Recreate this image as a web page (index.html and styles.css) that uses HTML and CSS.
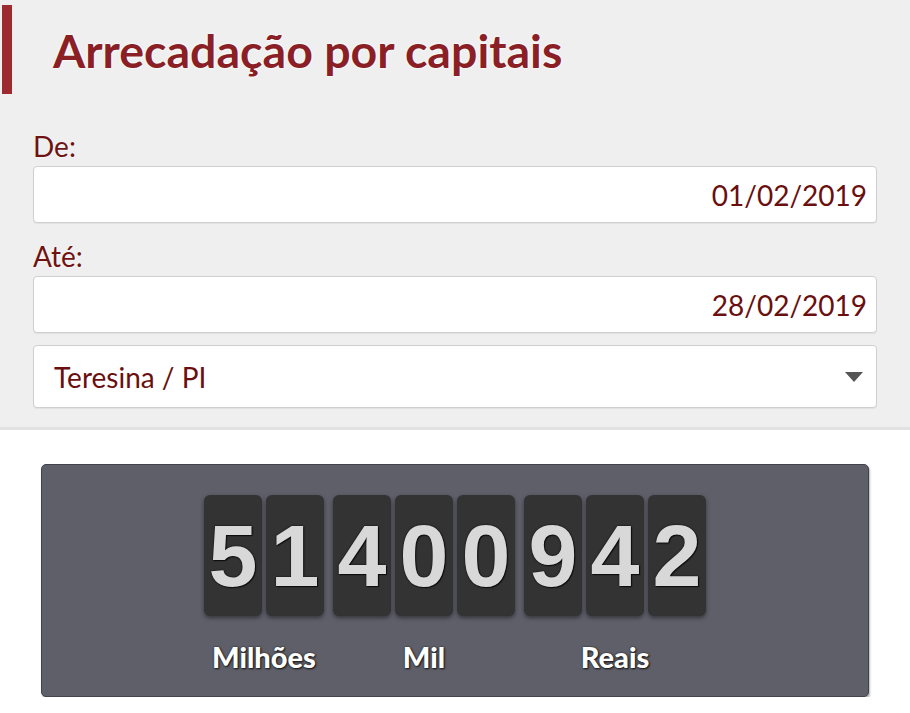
FILE: index.html
```html
<!DOCTYPE html>
<html lang="pt-BR">
<head>
  <meta charset="UTF-8">
  <meta name="viewport" content="width=device-width, initial-scale=1.0">
  <title>Arrecadação por capitais</title>
  <link rel="stylesheet" href="styles.css">
</head>
<body>
  <div class="filter-panel">
    <h1 class="panel-title">Arrecadação por capitais</h1>

    <div class="filter-form">
      <label class="field-label" for="date-from">De:</label>
      <input type="text" id="date-from" class="date-input" value="01/02/2019">

      <label class="field-label field-label-next" for="date-to">Até:</label>
      <input type="text" id="date-to" class="date-input" value="28/02/2019">

      <div class="city-select-wrap">
        <select id="city" class="city-select">
          <option>Teresina / PI</option>
        </select>
        <svg class="select-caret" width="18" height="10" viewBox="0 0 18 10">
          <path d="M0 0 L18 0 L9 10 Z" fill="#555"/>
        </svg>
      </div>
    </div>
  </div>

  <div class="counter-box">
    <div class="counter-groups">
      <div class="counter-group">
        <div class="digit-row">
          <span class="digit">5</span>
          <span class="digit">1</span>
        </div>
        <div class="group-label">Milhões</div>
      </div>
      <div class="counter-group">
        <div class="digit-row">
          <span class="digit">4</span>
          <span class="digit">0</span>
          <span class="digit">0</span>
        </div>
        <div class="group-label">Mil</div>
      </div>
      <div class="counter-group">
        <div class="digit-row">
          <span class="digit">9</span>
          <span class="digit">4</span>
          <span class="digit">2</span>
        </div>
        <div class="group-label">Reais</div>
      </div>
    </div>
  </div>
</body>
</html>
```

FILE: styles.css
```css
* {
  box-sizing: border-box;
}

body {
  font-family: Lato, "Open Sans", Arial, sans-serif;
  margin: 0;
  background: #fff;
}

.filter-panel {
  background: #efefef;
  border-bottom: 3px solid #e1e1e1;
  padding: 5px 0 19px 2px;
}

.panel-title {
  display: flex;
  align-items: center;
  height: 89px;
  margin: 0;
  padding-left: 41px;
  border-left: 10px solid #9c2a30;
  color: #8a1f26;
  font-size: 46.5px;
  font-weight: 700;
  text-shadow: 0 0 3px #fff, 0 0 2px #fff;
}

.filter-form {
  display: flex;
  flex-direction: column;
  padding: 35px 33px 0 31px;
}

.field-label {
  color: #6e1212;
  font-size: 28px;
  line-height: 34px;
  margin-bottom: 3px;
  text-shadow: 0 0 2px #fff;
}

.field-label-next {
  margin-top: 16px;
}

.date-input {
  width: 100%;
  height: 57px;
  padding: 0 9px;
  border: 1px solid #cfcfcf;
  border-radius: 4px;
  background: #fff;
  color: #6a0f0f;
  font-family: inherit;
  font-size: 28px;
  text-align: right;
  box-shadow: 0 1px 1px rgba(0, 0, 0, 0.06);
}

.city-select-wrap {
  position: relative;
  margin-top: 12px;
}

.city-select {
  appearance: none;
  -webkit-appearance: none;
  width: 100%;
  height: 63px;
  padding: 0 40px 0 20px;
  border: 1px solid #cfcfcf;
  border-radius: 4px;
  background: #fff;
  color: #6a0f0f;
  font-family: inherit;
  font-size: 28px;
  box-shadow: 0 1px 1px rgba(0, 0, 0, 0.06);
}

.select-caret {
  position: absolute;
  right: 14px;
  top: 27px;
  pointer-events: none;
}

.counter-box {
  margin: 34px 41px 0 41px;
  padding: 30px 0 21px 0;
  background: #5f5f6a;
  border: 1px solid #42424c;
  border-radius: 5px;
  box-shadow: 1px 2px 2px rgba(0, 0, 0, 0.3);
}

.counter-groups {
  display: flex;
  justify-content: center;
  gap: 9px;
}

.counter-group {
  display: flex;
  flex-direction: column;
  align-items: center;
}

.digit-row {
  display: flex;
  gap: 4px;
}

.digit {
  width: 58px;
  height: 121px;
  background: #333;
  border-radius: 6px;
  box-shadow: 0 2px 4px rgba(0, 0, 0, 0.45);
  color: #d8d8d8;
  font-family: "Liberation Sans", Arial, sans-serif;
  font-size: 88px;
  font-weight: 700;
  line-height: 121px;
  text-align: center;
  text-shadow: 0 0 2px #000, 1px 1px 1px #111;
}

.group-label {
  margin-top: 23px;
  color: #fff;
  font-size: 29px;
  font-weight: 900;
  line-height: 36px;
  text-shadow: 0 0 2px #222, 1px 1px 2px #111;
}
```
